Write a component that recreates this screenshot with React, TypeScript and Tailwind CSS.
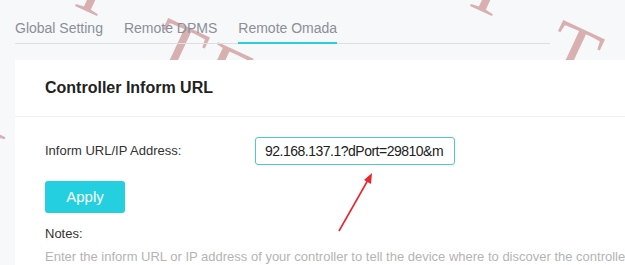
import React from "react";

const tabs = ["Global Setting", "Remote DPMS", "Remote Omada"];

// faint serif watermark letters painted on the page background,
// clipped to the grey strips that the card leaves uncovered
const topMarks = [
  { ch: "Y", cls: "left-[88px] top-[-62px]" },
  { ch: "T", cls: "left-[173px] top-[4px]" },
  { ch: "E", cls: "left-[222px] top-[28px]" },
  { ch: "Y", cls: "left-[483px] top-[-62px]" },
  { ch: "T", cls: "left-[568px] top-[6px]" },
];

function Mark({ ch, cls }: { ch: string; cls: string }) {
  return (
    <span
      className={`absolute ${cls} origin-top-left rotate-[25deg] text-[80px] leading-none text-[#d8b0b0] font-['Liberation_Serif',serif]`}
    >
      {ch}
    </span>
  );
}

function Watermark() {
  return (
    <>
      <div className="absolute left-0 top-0 w-[625px] h-[60px] overflow-hidden pointer-events-none">
        {topMarks.map((m, i) => (
          <Mark key={i} {...m} />
        ))}
      </div>
      <div className="absolute left-0 top-[60px] w-[15px] h-[205px] overflow-hidden pointer-events-none">
        <Mark ch="V" cls="left-[-40px] top-[40px]" />
      </div>
    </>
  );
}

function Arrow() {
  return (
    <svg
      className="absolute left-0 top-0 pointer-events-none"
      width="625"
      height="265"
      viewBox="0 0 625 265"
    >
      <line x1="339" y1="231" x2="368" y2="180" stroke="#e8262d" strokeWidth="1.6" />
      <polygon points="372,173 371,184 364,180" fill="#e8262d" />
    </svg>
  );
}

export default function App() {
  return (
    <div className="relative w-[625px] h-[265px] overflow-hidden bg-[#f7f8fa] font-['Liberation_Sans',Arial,sans-serif]">
      <Watermark />

      <div className="relative pl-[15px] pt-[18px]">
        <div className="flex gap-[21px] w-[535px] border-b border-[#dcdfe4]">
          {tabs.map((t) => (
            <div
              key={t}
              className={`text-[14px] leading-[20px] pb-[4px] mb-[-1px] border-b-2 text-[#8a8f98] ${
                t === "Remote Omada" ? "border-[#2ccfd8]" : "border-transparent"
              }`}
            >
              {t}
            </div>
          ))}
        </div>

        <div className="relative mt-[16px] w-[700px] h-[300px] bg-white">
          <div className="h-[57px] px-[30px] flex items-center border-b border-[#eef0f2]">
            <h2 className="text-[16px] leading-[20px] font-bold text-[#222]">
              Controller Inform URL
            </h2>
          </div>

          <div className="px-[30px] pt-[20px]">
            <div className="flex items-center">
              <label className="w-[210px] text-[13px] leading-[18px] text-[#333]">
                Inform URL/IP Address:
              </label>
              <input
                readOnly
                value="92.168.137.1?dPort=29810&m"
                className="w-[200px] h-[28px] border border-[#4dc8d6] rounded-[3px] pl-[9px] pr-[4px] text-[14px] tracking-[-0.5px] text-[#222] outline-none bg-white"
              />
            </div>

            <button className="mt-[16px] w-[80px] h-[32px] rounded-[3px] bg-[#24d0e0] text-white text-[15px]">
              Apply
            </button>

            <div className="mt-[12px] text-[13px] leading-[18px] text-[#333]">Notes:</div>
            <div className="mt-[5px] text-[13px] leading-[18px] text-[#b4b4b4] whitespace-nowrap">
              Enter the inform URL or IP address of your controller to tell the device where to
              discover the controller.
            </div>
          </div>
        </div>
      </div>

      <Arrow />
    </div>
  );
}
